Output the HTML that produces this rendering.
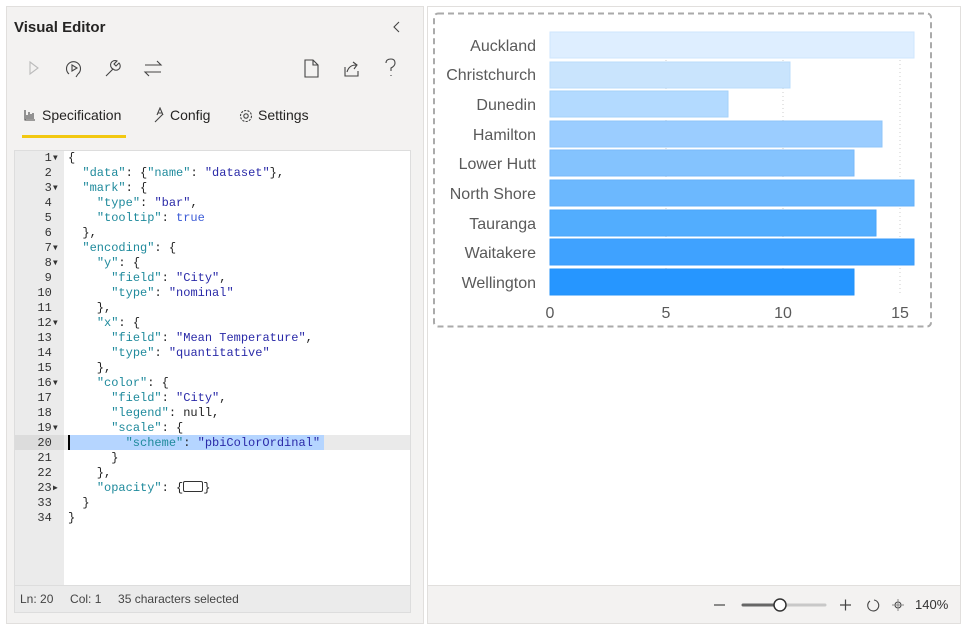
<!DOCTYPE html>
<html><head><meta charset="utf-8"><style>
*{margin:0;padding:0;box-sizing:border-box}
body{width:963px;height:627px;background:#fff;font-family:"Liberation Sans",sans-serif;position:relative;overflow:hidden}
.abs{position:absolute}
#left{left:6px;top:6px;width:418px;height:618px;background:#f3f2f1;border:1px solid #e1dfdd}
#right{left:427px;top:6px;width:534px;height:618px;background:#fff;border:1px solid #e1dfdd}
.code{font-family:"Liberation Mono",monospace;font-size:12px;line-height:15px;white-space:pre;color:#222}
.k{color:#1f8a9c}.s{color:#2a2aa8}.b{color:#3b5bd6}
.ln{width:48px;text-align:right;color:#333;padding-right:4px}
.ico{stroke:#444;fill:none;stroke-width:1.1}
</style></head><body>
<div id="left" class="abs"></div>
<div class="abs" style="left:14px;top:19px;font-size:15px;font-weight:bold;color:#252423">Visual Editor</div>
<svg class="abs" style="left:391px;top:19px" width="12" height="16"><path d="M8 3 L3 8 L8 13" class="ico" stroke="#777"/></svg>
<!-- toolbar -->
<svg class="abs" style="left:26px;top:58px" width="150" height="20">
<path d="M4 4 L12 10 L4 16Z" fill="none" stroke="#bbb" stroke-width="1.1"/>
<path d="M43 16 A7 7 0 1 1 52 16 M52 16 L50 19" class="ico"/><path d="M46 7 L51 10 L46 13Z" class="ico"/>
<path d="M80 18 L87 11 A4 4 0 0 1 91 3 L88 6 L90 8 L93 5 A4 4 0 0 1 87 11" class="ico"/>
<path d="M119 7 H135 L131 3 M135 14 H119 L123 18" class="ico"/>
</svg>
<svg class="abs" style="left:300px;top:57px" width="105" height="22">
<path d="M5 3 H13 L18 8 V20 H5Z M13 3 V8 H18" class="ico"/>
<path d="M45 10 V19 H58 V14 M47 15 Q49 8 56 8 M53 5 L57 8 L54 12" class="ico"/>
<path d="M86 6 Q86 2 91 2 Q95 2 95 6 Q95 9 91 11 V14 M91 18 V19" class="ico"/>
</svg>
<!-- tabs -->
<svg class="abs" style="left:24px;top:109px" width="12" height="12"><path d="M1 1 V11 H11 M3 10 V6 M5 10 V3 M7 10 V5 M9 10 V4" class="ico" stroke="#333"/></svg>
<div class="abs" style="left:42px;top:107px;font-size:14px;color:#252423">Specification</div>
<div class="abs" style="left:22px;top:135px;width:104px;height:3px;background:#f2c811"></div>
<svg class="abs" style="left:153px;top:107px" width="14" height="16"><path d="M2 15 L10 7 M4 8 L7 1 L10 8 M5 6 H9" class="ico" stroke="#555"/></svg>
<div class="abs" style="left:170px;top:107px;font-size:14px;color:#252423">Config</div>
<svg class="abs" style="left:238px;top:108px" width="16" height="16"><circle cx="8" cy="8" r="5.5" class="ico" stroke-dasharray="2.2 1.2"/><circle cx="8" cy="8" r="2.2" class="ico"/></svg>
<div class="abs" style="left:258px;top:107px;font-size:14px;color:#252423">Settings</div>
<!-- editor -->
<div class="abs" style="left:14px;top:150px;width:397px;height:463px;background:#fff;border:1px solid #ddd"></div>
<div class="abs" style="left:15px;top:151px;width:49px;height:434px;background:#ebebeb"></div>
<div class="abs" style="left:15px;top:435px;width:49px;height:15px;background:#dcdcdc"></div>
<div class="abs" style="left:64px;top:435px;width:346px;height:15px;background:#eaeaea"></div>
<div class="abs" style="left:68px;top:435px;width:256px;height:15px;background:#b5d5ff"></div>
<div class="abs" style="left:68px;top:435px;width:2px;height:15px;background:#000"></div>
<div class="abs code" style="left:15px;top:151px"><div class="ln">1▾</div><div class="ln">2 </div><div class="ln">3▾</div><div class="ln">4 </div><div class="ln">5 </div><div class="ln">6 </div><div class="ln">7▾</div><div class="ln">8▾</div><div class="ln">9 </div><div class="ln">10 </div><div class="ln">11 </div><div class="ln">12▾</div><div class="ln">13 </div><div class="ln">14 </div><div class="ln">15 </div><div class="ln">16▾</div><div class="ln">17 </div><div class="ln">18 </div><div class="ln">19▾</div><div class="ln">20 </div><div class="ln">21 </div><div class="ln">22 </div><div class="ln">23▸</div><div class="ln">33 </div><div class="ln">34 </div></div>
<div class="abs code" style="left:68px;top:151px">{
  <span class="k">"data"</span>: {<span class="k">"name"</span>: <span class="s">"dataset"</span>},
  <span class="k">"mark"</span>: {
    <span class="k">"type"</span>: <span class="s">"bar"</span>,
    <span class="k">"tooltip"</span>: <span class="b">true</span>
  },
  <span class="k">"encoding"</span>: {
    <span class="k">"y"</span>: {
      <span class="k">"field"</span>: <span class="s">"City"</span>,
      <span class="k">"type"</span>: <span class="s">"nominal"</span>
    },
    <span class="k">"x"</span>: {
      <span class="k">"field"</span>: <span class="s">"Mean Temperature"</span>,
      <span class="k">"type"</span>: <span class="s">"quantitative"</span>
    },
    <span class="k">"color"</span>: {
      <span class="k">"field"</span>: <span class="s">"City"</span>,
      <span class="k">"legend"</span>: null,
      <span class="k">"scale"</span>: {
        <span class="k">"scheme"</span>: <span class="s">"pbiColorOrdinal"</span>
      }
    },
    <span class="k">"opacity"</span>: {<span style="display:inline-block;width:20px;height:11px;border:1px solid #333;border-radius:2px;vertical-align:-1px"></span>}
  }
}</div>
<div class="abs" style="left:15px;top:585px;width:395px;height:27px;background:#ebebeb;border-top:1px solid #ddd"></div>
<div class="abs" style="left:20px;top:592px;font-size:12px;color:#444">Ln: 20 &nbsp;&nbsp;&nbsp; Col: 1 &nbsp;&nbsp;&nbsp; 35 characters selected</div>
<!-- right -->
<div id="right" class="abs"></div>
<div class="abs" style="left:428px;top:585px;width:532px;height:38px;background:#f3f2f1;border-top:1px solid #e1dfdd"></div>
<svg class="abs" style="left:710px;top:594px" width="200" height="22">
<path d="M4 11 H15" stroke="#444" stroke-width="1.2"/>
<path d="M33 11 H70" stroke="#666" stroke-width="3" stroke-linecap="round"/>
<path d="M70 11 H115" stroke="#c8c8c8" stroke-width="3" stroke-linecap="round"/>
<circle cx="70" cy="11" r="6" fill="#fff" stroke="#333" stroke-width="1.5"/>
<path d="M130 11 H141 M135.5 5.5 V16.5" stroke="#444" stroke-width="1.2"/>
<path d="M160 7 A5.5 5.5 0 1 0 164 6" class="ico"/>
<circle cx="188" cy="11" r="3" class="ico" stroke="#888"/><path d="M188 5 V17 M182 11 H194" stroke="#888"/>
</svg>
<div class="abs" style="left:915px;top:597px;font-size:13px;color:#333">140%</div>
<!-- chart -->
<svg class="abs" style="left:427px;top:6px" width="534" height="330" font-family="Liberation Sans,sans-serif">
<rect x="7" y="7.5" width="497" height="313" rx="4" fill="none" stroke="#aaa" stroke-width="2" stroke-dasharray="6 4"/>
<g stroke="#ccc" stroke-dasharray="1 3"><path d="M239 26 V290 M356 26 V290 M473 26 V290"/></g>
<g>
<rect x="123" y="26" width="364" height="26" fill="#deeeff" stroke="#cfe6fd"/>
<rect x="123" y="56" width="240" height="26" fill="#c9e4fd" stroke="#bbdcfb"/>
<rect x="123" y="85" width="178" height="26" fill="#b3daff" stroke="#a6d1fa"/>
<rect x="123" y="115" width="332" height="26" fill="#9bcdff" stroke="#8fc5fa"/>
<rect x="123" y="144" width="304" height="26" fill="#84c3fe" stroke="#79bafa"/>
<rect x="123" y="174" width="364" height="26" fill="#6cb8fe" stroke="#63b0fa"/>
<rect x="123" y="204" width="326" height="26" fill="#52adfe" stroke="#4aa5fa"/>
<rect x="123" y="233" width="364" height="26" fill="#3fa2ff" stroke="#3a9bfa"/>
<rect x="123" y="263" width="304" height="26" fill="#2696ff" stroke="#2291fa"/>
</g>
<g font-size="16" fill="#5a5a5a" text-anchor="end">
<text x="109" y="45">Auckland</text><text x="109" y="74">Christchurch</text><text x="109" y="104">Dunedin</text><text x="109" y="134">Hamilton</text><text x="109" y="163">Lower Hutt</text><text x="109" y="193">North Shore</text><text x="109" y="223">Tauranga</text><text x="109" y="252">Waitakere</text><text x="109" y="282">Wellington</text>
</g>
<g font-size="16" fill="#5a5a5a" text-anchor="middle">
<text x="123" y="312">0</text><text x="239" y="312">5</text><text x="356" y="312">10</text><text x="473" y="312">15</text>
</g>
</svg>
</body></html>
